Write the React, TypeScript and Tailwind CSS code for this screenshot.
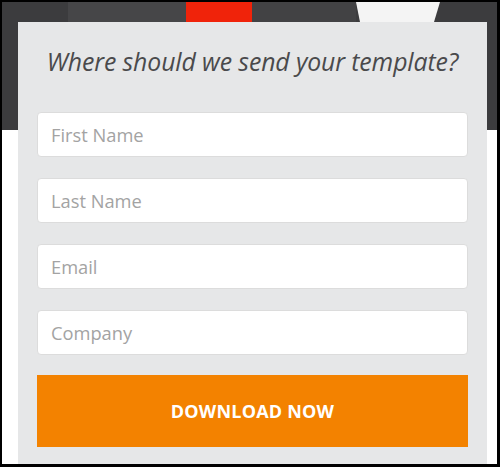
import React from "react";

const fields = ["First Name", "Last Name", "Email", "Company"];

export default function App() {
  return (
    <div className="w-[500px] h-[467px] bg-black pt-[2px] pl-[2px] pr-[3px] pb-[3px] overflow-hidden" style={{ fontFamily: '"Open Sans", sans-serif' }}>
      <div className="relative w-full h-full bg-white overflow-hidden">
        {/* header photo strip behind the form */}
        <div className="absolute inset-x-0 top-0 h-[128px] bg-[#3c3c3e]">
          <div className="flex h-[20px]">
            <div className="w-[66px]" />
            <div className="w-[118px] bg-[#464648]" />
            <div className="w-[66px] bg-[#f0230a]" />
            <div className="w-[104px] bg-[#424244]" />
            <svg width="84" height="20" viewBox="0 0 84 20">
              <polygon points="0,0 84,0 78,20 4,20" fill="#f4f4f4" />
            </svg>
          </div>
        </div>

        {/* form card */}
        <div className="relative ml-[16px] mt-[20px] w-[469px] h-[460px] bg-[#e6e7e8] px-[19px]">
          <h2 className="pt-[23px] text-center italic text-[24.8px] leading-[32px] text-[#4a4a4c] tracking-[-0.1px]">
            Where should we send your template?
          </h2>
          <div className="mt-[35px] flex flex-col gap-[21px]">
            {fields.map((f) => (
              <div
                key={f}
                className="h-[45px] bg-white border border-[#dcdcdc] rounded-[4px] flex items-center pl-[13px] text-[18.3px] text-[#a3a3a3]"
              >
                {f}
              </div>
            ))}
          </div>
          <button className="mt-[20px] w-full h-[72px] bg-[#f38200] text-white font-bold text-[18px] tracking-[0.2px] flex items-center justify-center">
            DOWNLOAD NOW
          </button>
        </div>
      </div>
    </div>
  );
}
